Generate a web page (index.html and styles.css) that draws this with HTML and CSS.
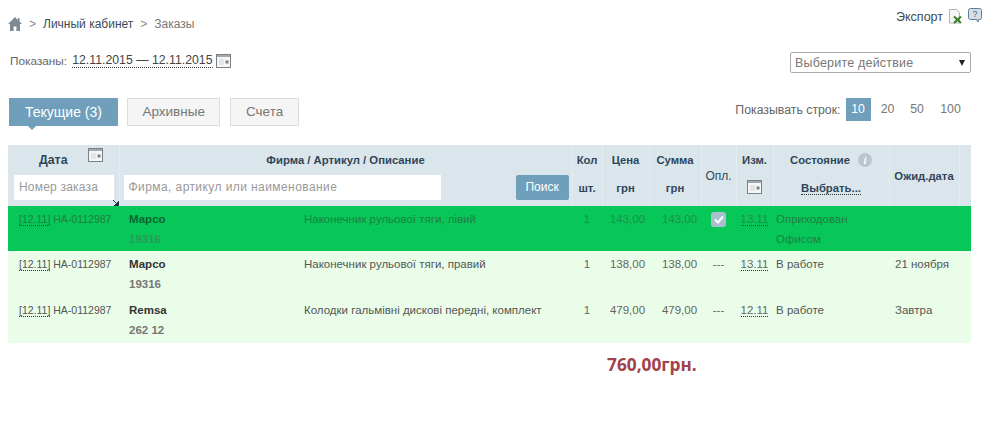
FILE: index.html
```html
<!DOCTYPE html>
<html lang="ru">
<head>
  <meta charset="UTF-8" />
  <title>Заказы</title>
  <link rel="stylesheet" href="styles.css">
</head>
<body>
  <div class="top-row">
    <div class="crumbs">
      <svg class="home" width="14" height="14" viewBox="0 0 14 14"><path d="M7 0 0 7h2v7h3.6V9.4h2.8V14H12V7h2l-2.4-2.4V1H10v2z" fill="#7d8a94"/></svg>
      <span class="sep">&gt;</span>
      <a class="crumb-link">Личный кабинет</a>
      <span class="sep">&gt;</span>
      <span class="crumb-cur">Заказы</span>
    </div>
    <div class="export">
      <span>Экспорт</span>
      <svg class="xls" width="15" height="15" viewBox="0 0 15 15"><path d="M1.5.5h7l3 3V14h-10z" fill="#f4f6f7" stroke="#a9b4bb"/><path d="M6 7.500l7 6.500M13 7.500 6 14" stroke="#3b7d22" stroke-width="2"/></svg>
      <svg class="help" width="14" height="15" viewBox="0 0 14 15"><rect x=".5" y=".5" width="13" height="11" rx="2" fill="#d5dfe8" stroke="#5f7f99"/><path d="M8 11.500l2 2.500 1-2.500" fill="#d5dfe8" stroke="#5f7f99"/><text x="7" y="9" class="help-q">?</text></svg>
    </div>
  </div>

  <div class="filter-row">
    <div class="shown">
      <span class="shown-label">Показаны:</span>
      <a class="dotted shown-range">12.11.2015 — 12.11.2015</a>
      <svg class="cal" width="15" height="14" viewBox="0 0 15 14"><use href="#cal-icon"/></svg>
    </div>
    <div class="action-select"><span>Выберите действие</span><i class="arrow"></i></div>
  </div>

  <div class="tabs-row">
    <div class="tabs">
      <a class="tab active">Текущие (3)</a>
      <a class="tab">Архивные</a>
      <a class="tab">Счета</a>
    </div>
    <div class="pager">
      <span class="pager-label">Показывать строк:</span>
      <a class="page active">10</a>
      <a class="page">20</a>
      <a class="page">50</a>
      <a class="page">100</a>
    </div>
  </div>

  <table class="orders">
    <colgroup>
      <col class="c-date"><col class="c-firm"><col class="c-desc"><col class="c-qty"><col class="c-price"><col class="c-sum"><col class="c-paid"><col class="c-chg"><col class="c-state"><col class="c-exp"><col class="c-end">
    </colgroup>
    <thead>
      <tr class="head-top">
        <th>
          <div class="date-head"><span>Дата</span><svg width="15" height="14" viewBox="0 0 15 14"><use href="#cal-icon"/></svg></div>
        </th>
        <th colspan="2">Фирма / Артикул / Описание</th>
        <th>Кол</th>
        <th>Цена</th>
        <th>Сумма</th>
        <th rowspan="2" class="plain">Опл.</th>
        <th>Изм.</th>
        <th><div class="state-head"><span>Состояние</span><i class="info">i</i></div></th>
        <th rowspan="2">Ожид.дата</th>
        <th rowspan="2"></th>
      </tr>
      <tr class="head-bottom">
        <th class="with-input">
          <div class="fake-input">Номер заказа</div>
          <svg class="corner" width="6" height="6" viewBox="0 0 6 6"><path d="M0 0l3.500 3.500M6 1v5H1z" stroke="#1d3345" fill="#1d3345"/></svg>
        </th>
        <th colspan="2" class="with-input">
          <div class="search-row">
            <div class="fake-input wide">Фирма, артикул или наименование</div>
            <a class="search-btn">Поиск</a>
          </div>
        </th>
        <th>шт.</th>
        <th>грн</th>
        <th>грн</th>
        <th><svg width="15" height="14" viewBox="0 0 15 14"><use href="#cal-icon"/></svg></th>
        <th><a class="dotted choose">Выбрать...</a></th>
      </tr>
    </thead>
    <tbody>
      <tr class="row-done">
        <td class="t-order"><a class="dotted">[12.11]</a> НА-0112987</td>
        <td class="t-firm"><b>Марсо</b><b class="code">19316</b></td>
        <td class="t-desc">Наконечник рульової тяги, лівий</td>
        <td class="num">1</td>
        <td class="num t-price">143,00</td>
        <td class="num t-sum">143,00</td>
        <td class="num"><span class="check">
          <svg width="10" height="9" viewBox="0 0 10 9"><path d="M1 4.500l3 3 5-6" fill="none" stroke="#fff" stroke-width="2"/></svg>
        </span></td>
        <td class="num"><a class="dotted">13.11</a></td>
        <td>Оприходован<br>Офисом</td>
        <td class="t-exp"></td>
        <td></td>
      </tr>
      <tr>
        <td class="t-order"><a class="dotted">[12.11]</a> НА-0112987</td>
        <td class="t-firm"><b>Марсо</b><b class="code">19316</b></td>
        <td class="t-desc">Наконечник рульової тяги, правий</td>
        <td class="num">1</td>
        <td class="num t-price">138,00</td>
        <td class="num t-sum">138,00</td>
        <td class="num">---</td>
        <td class="num"><a class="dotted">13.11</a></td>
        <td>В работе</td>
        <td class="t-exp">21 ноября</td>
        <td></td>
      </tr>
      <tr>
        <td class="t-order"><a class="dotted">[12.11]</a> НА-0112987</td>
        <td class="t-firm"><b>Remsa</b><b class="code">262 12</b></td>
        <td class="t-desc">Колодки гальмівні дискові передні, комплект</td>
        <td class="num">1</td>
        <td class="num t-price">479,00</td>
        <td class="num t-sum">479,00</td>
        <td class="num">---</td>
        <td class="num"><a class="dotted">12.11</a></td>
        <td>В работе</td>
        <td class="t-exp">Завтра</td>
        <td></td>
      </tr>
    </tbody>
  </table>

  <div class="total">760,00грн.</div>

  <svg class="icon-defs" width="0" height="0">
    <symbol id="cal-icon" viewBox="0 0 15 14">
      <rect x=".5" y=".5" width="14" height="13" fill="#f6f6f6" stroke="#7b8085"/>
      <rect x="1" y="1" width="13" height="2" fill="#a3a8ad"/>
      <rect x="3" y="5" width="5" height="6" fill="#e3e6e8"/>
      <rect x="9.500" y="6.500" width="3" height="3" fill="#7b8085"/>
    </symbol>
  </svg>
</body>
</html>
```

FILE: styles.css
```css
body {
  font-family: 'Liberation Sans', Arial, sans-serif;
  font-size: 12px;
  color: #555;
  background: #fff;
  margin: 0;
  padding: 0 29px 0 8px;
  height: 436px;
  overflow: hidden;
  box-sizing: border-box;
}

a {
  color: inherit;
}

.dotted {
  border-bottom: 1px dotted #333;
}

.top-row {
  display: flex;
  justify-content: space-between;
  align-items: flex-start;
  height: 52px;
}

.crumbs {
  display: flex;
  align-items: center;
  margin-top: 17px;
  font-size: 12px;
  color: #8a9096;
}

.home {
  margin-right: 7px;
}

.sep {
  margin-right: 7px;
  color: #888;
}

.crumb-link {
  color: #3c4a57;
  margin-right: 7px;
}

.crumb-cur {
  color: #777;
}

.export {
  display: flex;
  align-items: flex-start;
  margin-top: 8px;
  margin-right: -11px;
  font-size: 12.5px;
  color: #3d4a52;
}

.export span {
  margin-top: 2px;
  margin-right: 5px;
}

.export .xls {
  margin-top: 1px;
}

.export .help {
  margin-left: 5px;
}

.help-q {
  font-size: 9px;
  fill: #4d6579;
  text-anchor: middle;
}

.filter-row {
  display: flex;
  justify-content: space-between;
  align-items: flex-start;
  height: 46px;
}

.shown {
  display: flex;
  align-items: center;
  margin-left: 2px;
  margin-top: 1px;
}

.shown-label {
  font-size: 11.800px;
  color: #666;
  margin-right: 5px;
}

.shown-range {
  color: #444;
  font-size: 12.300px;
  margin-right: 3px;
}

.cal {
  flex: none;
}

.action-select {
  width: 181px;
  height: 21px;
  box-sizing: border-box;
  border: 1px solid #aaa;
  border-radius: 2px;
  display: flex;
  justify-content: space-between;
  align-items: center;
  padding: 0 4px;
  font-size: 12.500px;
  color: #777;
  letter-spacing: 0.2px;
}

.arrow {
  border-left: 3.500px solid transparent;
  border-right: 3.500px solid transparent;
  border-top: 6px solid #222;
  margin-right: 1px;
}

.tabs-row {
  display: flex;
  justify-content: space-between;
  align-items: flex-start;
  height: 47px;
}

.tabs {
  display: flex;
  gap: 10px;
  margin-left: 1px;
}

.tab {
  height: 28px;
  line-height: 26px;
  padding: 0 14.500px;
  box-sizing: border-box;
  font-size: 13.500px;
  color: #777;
  background: #f5f5f5;
  border: 1px solid #ddd;
  position: relative;
}

.tab.active {
  background: #6f9fbb;
  border-color: #6f9fbb;
  color: #fff;
  font-size: 14px;
  padding: 0 15px;
  margin-right: -1px;
}

.tab.active::after {
  content: "";
  position: absolute;
  left: 17px;
  top: 100%;
  border-left: 5px solid transparent;
  border-right: 5px solid transparent;
  border-top: 5px solid #6f9fbb;
}

.pager {
  display: flex;
  align-items: center;
  margin-right: 8px;
  font-size: 12.300px;
  color: #777;
}

.pager-label {
  color: #666;
  margin-right: 5px;
}

.page {
  min-width: 25px;
  height: 23px;
  line-height: 23px;
  text-align: center;
  margin-right: 4.500px;
}

.page:last-child {
  margin-right: 0;
  margin-left: 4px;
}

.page.active {
  background: #6f9fbb;
  color: #fff;
}

.orders {
  width: 963px;
  table-layout: fixed;
  border-collapse: collapse;
}

.c-date { width: 111px; }
.c-firm { width: 181px; }
.c-desc { width: 272px; }
.c-qty { width: 30px; }
.c-price { width: 47px; }
.c-sum { width: 52px; }
.c-paid { width: 35px; }
.c-chg { width: 37px; }
.c-state { width: 116px; }
.c-exp { width: 70px; }
.c-end { width: 12px; }

.orders th {
  background: #dbe6ec;
  color: #2f465a;
  font-size: 11.300px;
  font-weight: bold;
  text-align: center;
  padding: 0;
  border-left: 1px solid #e3ecf1;
}

.orders th:first-child {
  border-left: 0;
}

.orders th.plain {
  font-weight: normal;
  font-size: 12px;
}

.head-top th {
  height: 30px;
}

.head-bottom th {
  height: 31px;
  box-sizing: border-box;
  padding-bottom: 6px;
  position: relative;
}

.date-head {
  display: flex;
  justify-content: center;
  gap: 21px;
  align-items: flex-start;
  padding-left: 16px;
  font-size: 12.300px;
}

.date-head svg {
  margin-top: -5px;
}

.state-head {
  display: flex;
  justify-content: center;
  align-items: center;
  gap: 8px;
}

.info {
  width: 14px;
  height: 14px;
  line-height: 14px;
  border-radius: 50%;
  background: #bcc6cc;
  color: #fff;
  font-family: 'Liberation Serif', serif;
  font-size: 11px;
}

.choose {
  color: #2f465a;
}

.with-input {
  text-align: left;
}

.fake-input {
  height: 25px;
  line-height: 25px;
  box-sizing: border-box;
  background: #fff;
  margin-left: 6px;
  width: 100px;
  padding-left: 5px;
  font-size: 12px;
  font-weight: normal;
  color: #999;
  text-align: left;
  letter-spacing: 0.2px;
}

.fake-input.wide {
  width: 317px;
  margin-left: 4px;
  letter-spacing: 0.42px;
}

.corner {
  position: absolute;
  right: 0;
  bottom: 0;
}

.search-row {
  display: flex;
  justify-content: space-between;
  align-items: center;
  padding-right: 3px;
}

.search-btn {
  width: 53px;
  height: 25px;
  line-height: 25px;
  background: #6f9fbb;
  color: #fff;
  text-align: center;
  font-weight: normal;
  font-size: 12px;
  border-radius: 2px;
}

.orders td {
  height: 46px;
  padding: 3px 3px 0;
  box-sizing: border-box;
  vertical-align: top;
  background: #e9fde9;
  color: #555;
  font-size: 11.500px;
  line-height: 20px;
}

.orders tr.row-done td {
  height: 45px;
}

.orders td.t-order {
  padding-left: 11px;
  white-space: nowrap;
  font-size: 10.500px;
}

.orders td.t-firm {
  padding-left: 10px;
}

.orders td.t-desc {
  padding-left: 4px;
}

.orders td.t-exp {
  padding-left: 6px;
}

.orders td.num {
  text-align: center;
  padding-left: 0;
  padding-right: 0;
  color: #666;
}

.orders td.t-price {
  padding-left: 4px;
}

.orders td.t-sum {
  padding-left: 9px;
}

.orders td b {
  display: block;
  color: #333;
  font-size: 11.500px;
}

.orders td b.code {
  color: #777;
}

.orders .row-done td {
  background: #06c758;
  color: #1f7f43;
}

.orders .row-done td.num {
  color: #1f8f4a;
}

.orders .row-done td b {
  color: #0c6430;
}

.orders .row-done td b.code {
  color: #2a9a58;
}

.row-done .dotted {
  border-color: #125c2e;
}

.check {
  display: inline-flex;
  align-items: center;
  justify-content: center;
  width: 15px;
  height: 15px;
  border-radius: 3px;
  background: #a7c0cf;
  vertical-align: middle;
}

.total {
  margin-top: 10px;
  margin-left: 599px;
  font-family: 'Noto Sans', sans-serif;
  font-size: 17.300px;
  font-weight: bold;
  line-height: 24px;
  color: #a0434a;
}

.icon-defs {
  position: absolute;
}
```
